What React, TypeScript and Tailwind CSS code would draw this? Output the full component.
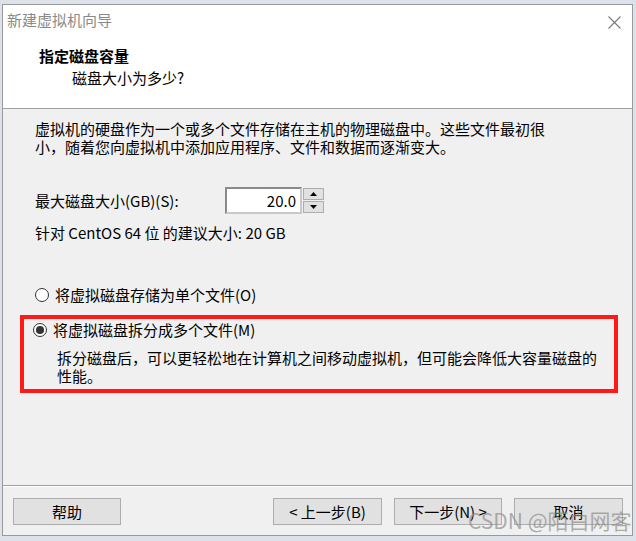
import React from 'react';

function Radio({ checked }: { checked?: boolean }) {
	return (
		<span className="flex items-center justify-center w-[14px] h-[14px] rounded-full border border-[#333333] bg-white shrink-0">
			{checked && <span className="block w-[8px] h-[8px] rounded-full bg-[#333333]" />}
		</span>
	);
}

function Btn({ label, w }: { label: string; w: string }) {
	return (
		<div className={`${w} h-[27px] flex items-center justify-center bg-[#e1e1e1] border border-[#adadad] text-[15px] leading-[18px] text-black`}>
			{label}
		</div>
	);
}

export default function App() {
	return (
		<div className="relative w-[636px] h-[541px] overflow-hidden bg-[#dde1ea] font-['Noto_Sans_CJK_SC',sans-serif] text-black">
			<div className="ml-[2px] mt-[4px] w-[631px] h-[532px] border border-[#9a9a9a] bg-[#f0f0f0] flex flex-col">
				{/* header */}
				<div className="h-[104px] bg-white border-b border-[#a0a0a0] flex flex-col">
					<div className="flex items-center justify-between pt-[6px] pl-[4px] pr-[11px]">
						<span className="text-[15px] leading-[18px] text-[#8a8a8a]">新建虚拟机向导</span>
						<svg width="13" height="13" viewBox="0 0 13 13" className="mt-[4px]">
							<path d="M0.5 0.5 L12.5 12.5 M12.5 0.5 L0.5 12.5" stroke="#7a7a7a" strokeWidth="1.1" fill="none" />
						</svg>
					</div>
					<div className="mt-[18px] pl-[36px] text-[15px] leading-[18px] font-bold">指定磁盘容量</div>
					<div className="mt-[4px] pl-[69px] text-[15px] leading-[18px]">磁盘大小为多少?</div>
				</div>

				{/* body */}
				<div className="flex-1 flex flex-col pl-[32px] pt-[11px] text-[15px] leading-[18px]">
					<p>
						虚拟机的硬盘作为一个或多个文件存储在主机的物理磁盘中。这些文件最初很
						<br />
						小，随着您向虚拟机中添加应用程序、文件和数据而逐渐变大。
					</p>
					<div className="mt-[31px] flex items-center">
						<span className="w-[190px]">最大磁盘大小(GB)(S):</span>
						<div className="w-[77px] h-[27px] border-2 border-[#8a8a8a] border-r-[#c8c8c8] border-b-[#c8c8c8] bg-white flex items-center justify-end pr-[4px]">
							20.0
						</div>
						<div className="ml-[1px] flex flex-col gap-[1px]">
							<div className="w-[21px] h-[12px] bg-[#e1e1e1] border border-[#adadad] flex items-center justify-center">
								<svg width="7" height="4" viewBox="0 0 7 4"><path d="M3.5 0 L7 4 L0 4 Z" fill="#000" /></svg>
							</div>
							<div className="w-[21px] h-[12px] bg-[#e1e1e1] border border-[#adadad] flex items-center justify-center">
								<svg width="7" height="4" viewBox="0 0 7 4"><path d="M0 0 L7 0 L3.5 4 Z" fill="#000" /></svg>
							</div>
						</div>
					</div>
					<div className="mt-[10px]">针对 CentOS 64 位 的建议大小: 20 GB</div>

					<div className="mt-[44px] flex items-center gap-[6px]">
						<Radio />
						<span>将虚拟磁盘存储为单个文件(O)</span>
					</div>

					<div className="mt-[11px] -ml-[15px] w-[598px] h-[78px] border-4 border-[#ff1a1a] pl-[9px] pt-[2px]">
						<div className="flex items-center gap-[6px]">
							<Radio checked />
							<span>将虚拟磁盘拆分成多个文件(M)</span>
						</div>
						<p className="mt-[10px] pl-[24px] pr-[4px]">
							拆分磁盘后，可以更轻松地在计算机之间移动虚拟机，但可能会降低大容量磁盘的性能。
						</p>
					</div>
				</div>

				{/* footer */}
				<div className="h-[50px] border-t border-[#a0a0a0] shadow-[inset_0_1px_0_#ffffff] flex items-start pt-[12px] pl-[10px] pr-[9px]">
					<Btn label="帮助" w="w-[108px]" />
					<div className="ml-auto flex gap-[12px]">
						<Btn label="< 上一步(B)" w="w-[109px]" />
						<Btn label="下一步(N) >" w="w-[108px]" />
						<Btn label="取消" w="w-[109px]" />
					</div>
				</div>
			</div>

			<span className="absolute left-[468px] top-[507px] text-[21px] leading-[26px] text-[#8c8c8c]/70 font-['Noto_Sans_CJK_SC',sans-serif]">
				CSDN @陌白网客
			</span>
		</div>
	);
}
